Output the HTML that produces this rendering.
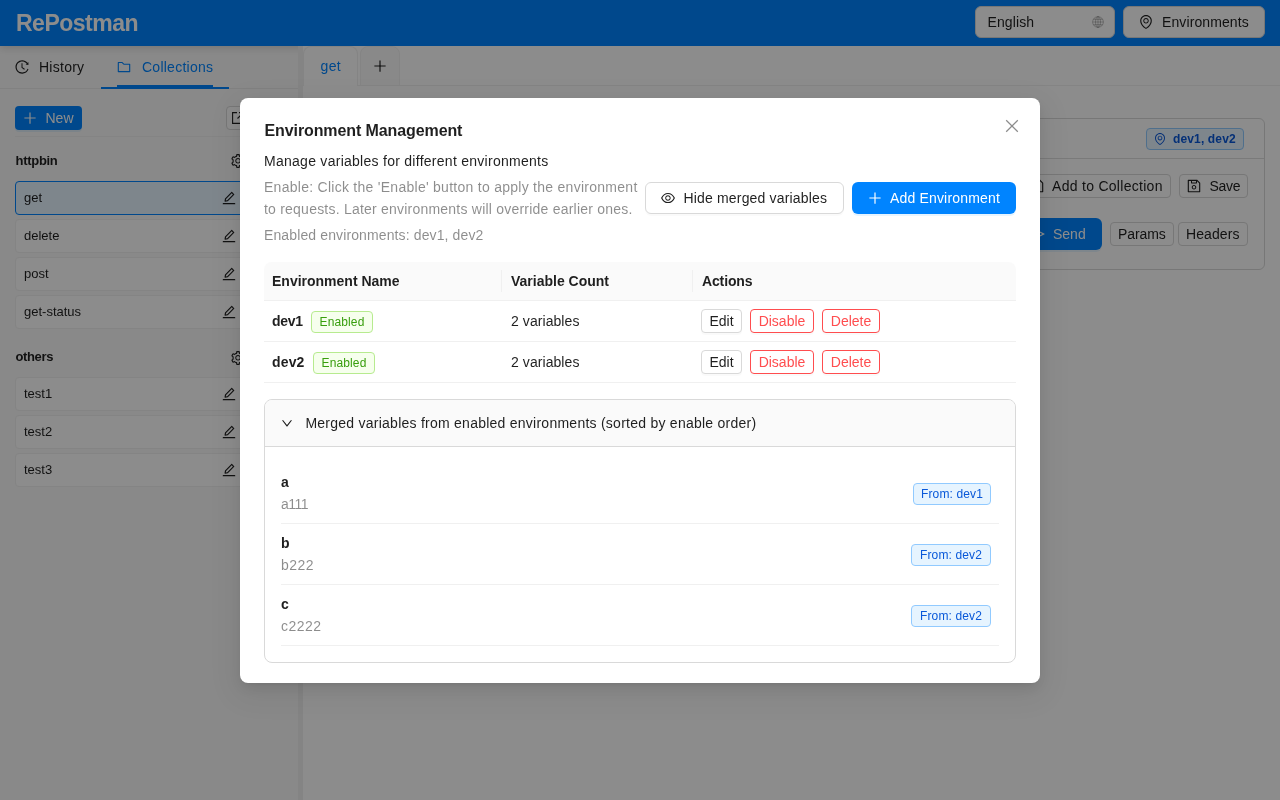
<!DOCTYPE html>
<html lang="en">
<head>
<meta charset="utf-8">
<title>RePostman</title>
<style>
*{box-sizing:border-box}
html,body{margin:0;padding:0}
body{width:1280px;height:800px;overflow:hidden;position:relative;background:#fff;
  font-family:"Liberation Sans",sans-serif;font-size:14px;line-height:22px;color:rgba(0,0,0,.88)}
.abs{position:absolute}
#hdr,#side,#main,#modal{will-change:transform}
svg{display:block}
b{font-weight:700}
/* header */
#hdr{position:absolute;left:0;top:0;width:1280px;height:46px;background:#0084ff;box-shadow:0 2px 8px rgba(0,0,0,.15);z-index:2}
#logo{position:absolute;left:16px;top:0;height:46px;line-height:46px;font-size:23px;font-weight:700;color:#fff;letter-spacing:-.5px;white-space:nowrap}
.hbtn{position:absolute;top:6px;height:32px;border-radius:6px;background:#fff;border:1px solid #d9d9d9;white-space:nowrap}
/* sidebar */
#side{position:absolute;left:0;top:46px;width:298px;height:754px;background:#fafafa}
#handle{position:absolute;left:298px;top:46px;width:5px;height:754px;background:#f0f0f0;z-index:3}
#main{position:absolute;left:303px;top:46px;width:977px;height:754px;background:#fff;z-index:3}
.t{position:absolute;white-space:nowrap}
.item{position:absolute;left:15px;width:240px;height:34px;border:1px solid #f0f0f0;border-radius:4px;background:#fff}
.item span{position:absolute;left:8px;top:5px;font-size:13px;line-height:22px}
.item.sel{border-color:#0084ff;background:#e6f4ff}
.btn{position:absolute;border:1px solid #d9d9d9;border-radius:4px;background:#fff;white-space:nowrap}
/* mask + modal */
#mask{position:absolute;left:0;top:0;width:1280px;height:800px;background:rgba(0,0,0,.45);z-index:5}
#modal{position:absolute;left:240px;top:98px;width:800px;height:585px;background:#fff;border-radius:8px;z-index:6;
  box-shadow:0 6px 16px 0 rgba(0,0,0,.08),0 3px 6px -4px rgba(0,0,0,.12),0 9px 28px 8px rgba(0,0,0,.05)}
.g{color:rgba(0,0,0,.45)}
.mb{position:absolute;border-radius:6px;height:32px;white-space:nowrap;font-size:14px;line-height:30px}
.sb{position:absolute;height:24px;border:1px solid #d9d9d9;border-radius:4px;background:#fff;font-size:14px;line-height:22px;text-align:center;white-space:nowrap;box-shadow:0 2px 0 rgba(0,0,0,.02)}
.sb.d{border-color:#ff4d4f;color:#ff4d4f}
.tag{letter-spacing:.12px;position:absolute;height:22px;border-radius:4px;font-size:12px;line-height:20px;text-align:center;white-space:nowrap}
.tag.gr{background:#f6ffed;border:1px solid #b7eb8f;color:#389e0d}
.tag.bl{background:#e6f4ff;border:1px solid #91caff;color:#0958d9}
.hl{position:absolute;height:1px;background:#f0f0f0}
</style>
</head>
<body>

<!-- ================= APP BEHIND ================= -->
<div id="hdr">
  <div id="logo">RePostman</div>
  <div class="hbtn" style="left:975px;width:140px">
    <span class="t" style="left:11.500px;top:4px;letter-spacing:.12px">English</span>
    <svg width="12" height="12" viewBox="0 0 12 12" fill="none" stroke="rgba(0,0,0,.25)" stroke-width="0.9" style="position:absolute;left:116px;top:9px"><circle cx="6" cy="6" r="5.4"/><ellipse cx="6" cy="6" rx="2.5" ry="5.4"/><path d="M.6 6h10.800M1.400 3.300h9.200M1.400 8.700h9.200M6 .6v10.800"/></svg>
  </div>
  <div class="hbtn" style="left:1123px;width:142px">
    <svg width="14" height="14" viewBox="64 64 896 896" fill="currentColor" style="position:absolute;left:15px;top:8px;"><path d="M854.600 289.100a362.490 362.490 0 00-79.900-115.700 370.830 370.830 0 00-118.200-77.800C610.700 76.600 562.100 67 512 67c-50.100 0-98.700 9.600-144.500 28.500-44.300 18.300-84 44.500-118.200 77.800A363.600 363.600 0 00169.400 289c-19.500 45-29.400 92.800-29.400 142 0 70.600 16.900 140.900 50.100 208.700 26.700 54.500 64 107.600 111 158.100 80.300 86.200 164.500 138.900 188.400 153a43.900 43.900 0 0022.400 6.100c7.800 0 15.500-2 22.400-6.100 23.900-14.100 108.100-66.800 188.400-153 47-50.400 84.300-103.600 111-158.100C867.100 572 884 501.800 884 431.100c0-49.200-9.900-97-29.400-142zM512 880.200c-65.900-41.900-300-207.800-300-449.100 0-77.900 31.100-151.100 87.600-206.300C356.300 169.500 431.700 139 512 139s155.700 30.500 212.400 85.900C780.900 280 812 353.200 812 431.100c0 241.300-234.100 407.200-300 449.100zm0-617.200c-97.200 0-176 78.800-176 176s78.800 176 176 176 176-78.800 176-176-78.800-176-176-176zm79.200 255.200A111.600 111.600 0 01512 551c-29.900 0-58-11.700-79.200-32.800A111.600 111.600 0 01400 439c0-29.900 11.700-58 32.800-79.200C454 338.600 482.100 327 512 327c29.900 0 58 11.600 79.200 32.800C612.400 381 624 409.100 624 439c0 29.900-11.600 58-32.800 79.200z"/></svg>
    <span class="t" style="left:38px;top:4px;letter-spacing:.1px">Environments</span>
  </div>
</div>

<div id="side">
  <svg width="14" height="14" viewBox="64 64 896 896" fill="currentColor" style="position:absolute;left:15px;top:14px;"><path d="M536.100 273H488c-4.400 0-8 3.600-8 8v275.300c0 2.600 1.200 5 3.300 6.500l165.300 120.700c3.600 2.600 8.600 1.900 11.200-1.700l28.600-39c2.700-3.700 1.900-8.700-1.700-11.200L544.100 528.500V281c0-4.400-3.600-8-8-8zm219.800 75.200l156.800 38.300c5 1.200 9.900-2.600 9.900-7.700l.8-161.500c0-6.700-7.700-10.500-12.900-6.300L752.900 334.100a8 8 0 003 14.100zm167.700 301.100l-56.700-19.500a8 8 0 00-10.100 4.800c-1.900 5.100-3.900 10.100-6 15.100-17.800 42.100-43.300 80-75.900 112.500a353 353 0 01-112.500 75.900 352.180 352.180 0 01-137.700 27.800c-47.800 0-94.100-9.300-137.700-27.800a353 353 0 01-112.500-75.900c-32.500-32.500-58-70.400-75.900-112.500A353.440 353.440 0 01171 512c0-47.800 9.300-94.200 27.800-137.800 17.800-42.100 43.300-80 75.900-112.500a353 353 0 01112.500-75.900C430.600 167.300 477 158 524.800 158s94.100 9.300 137.700 27.800A353 353 0 01775 261.700c10.200 10.300 19.800 21 28.600 32.300l59.800-46.800C784.700 146.600 662.200 81.900 524.600 82 285 82.100 92.600 276.700 95 516.400 97.400 751.900 288.900 942 524.800 942c185.500 0 343.500-117.600 403.700-282.300 1.500-4.200-.7-8.900-4.900-10.400z"/></svg>
  <span class="t" style="left:39px;top:10px;letter-spacing:.26px">History</span>
  <svg width="14" height="14" viewBox="64 64 896 896" fill="currentColor" style="position:absolute;left:117px;top:14px;color:#0084ff;"><path d="M880 298.400H521L403.700 186.200a8.150 8.150 0 00-5.500-2.200H144c-17.700 0-32 14.300-32 32v592c0 17.700 14.300 32 32 32h736c17.700 0 32-14.300 32-32V330.400c0-17.700-14.300-32-32-32zM840 768H184V256h188.500l119.600 114.400H840V768z"/></svg>
  <span class="t" style="left:142px;top:10px;color:#0084ff;letter-spacing:.25px">Collections</span>
  <div class="abs" style="left:0;top:42px;width:298px;height:1px;background:#ececec"></div>
  <div class="abs" style="left:101px;top:41px;width:128px;height:2px;background:#0084ff"></div>
  <div class="abs" style="left:117px;top:39px;width:96px;height:2px;background:#0084ff"></div>

  <div class="abs" style="left:15px;top:60px;width:67px;height:24px;border-radius:4px;background:#0084ff;color:#fff;box-shadow:0 2px 0 rgba(5,145,255,.1)">
    <svg width="14" height="14" viewBox="64 64 896 896" fill="currentColor" style="position:absolute;left:8px;top:5px;"><path d="M482 152h60q8 0 8 8v704q0 8-8 8h-60q-8 0-8-8V160q0-8 8-8z"/><path d="M192 474h672q8 0 8 8v60q0 8-8 8H160q-8 0-8-8v-60q0-8 8-8z"/></svg>
    <span class="t" style="left:30.500px;top:1px">New</span>
  </div>
  <div class="btn" style="left:226px;top:60px;width:24px;height:24px">
    <svg width="14" height="14" viewBox="0 0 14 14" fill="none" stroke="currentColor" stroke-width="1.1" style="position:absolute;left:4px;top:4px"><path d="M12.400 8v4.400H1.600V1.600H6"/><path d="M8 1.600h4.400V6M12.400 1.600L6.500 7.500"/></svg>
  </div>
  <div class="abs" style="left:15px;top:90px;width:240px;height:1px;background:#f0f0f0"></div>

  <span class="t" style="left:15.500px;top:104px;font-size:13px;font-weight:700;letter-spacing:-.29px">httpbin</span>
  <svg width="14" height="14" viewBox="64 64 896 896" fill="currentColor" style="position:absolute;left:230.800px;top:108px;"><path d="M924.800 625.700l-65.500-56c3.100-19 4.700-38.400 4.700-57.800s-1.600-38.800-4.700-57.800l65.500-56a32.030 32.030 0 009.300-35.200l-.9-2.600a442.090 442.090 0 00-79.700-137.900l-1.800-2.100a32.120 32.120 0 00-35.100-9.500l-81.300 28.900c-30-24.600-63.500-44-99.700-57.600l-15.700-85a32.050 32.050 0 00-25.800-25.700l-2.700-.5c-52.100-9.400-106.900-9.400-159 0l-2.700.5a32.050 32.050 0 00-25.800 25.700l-15.800 85.400a351.860 351.860 0 00-99 57.400l-81.900-29.100a32 32 0 00-35.100 9.500l-1.800 2.100a446.020 446.020 0 00-79.700 137.900l-.9 2.600c-4.500 12.500-.8 26.500 9.300 35.200l66.300 56.600c-3.100 18.800-4.600 38-4.600 57.100 0 19.200 1.500 38.400 4.600 57.100L99 625.500a32.030 32.030 0 00-9.300 35.200l.9 2.600c18.100 50.400 44.900 96.900 79.700 137.900l1.800 2.100a32.120 32.120 0 0035.100 9.500l81.900-29.100c29.800 24.500 63.100 43.900 99 57.400l15.800 85.400a32.050 32.050 0 0025.800 25.700l2.700.5a449.400 449.400 0 00159 0l2.700-.5a32.050 32.050 0 0025.800-25.700l15.700-85a350 350 0 0099.700-57.600l81.300 28.900a32 32 0 0035.100-9.500l1.800-2.100c34.800-41.100 61.600-87.500 79.700-137.900l.9-2.600c4.500-12.300.8-26.300-9.300-35zM788.300 465.900c2.500 15.100 3.800 30.600 3.800 46.100s-1.300 31-3.800 46.100l-6.600 40.100 74.700 63.900a370.030 370.030 0 01-42.600 73.600L721 702.800l-31.400 25.800c-23.900 19.600-50.500 35-79.300 45.800l-38.100 14.300-17.900 97a377.500 377.500 0 01-85 0l-17.900-97.200-37.800-14.500c-28.500-10.800-55-26.200-78.700-45.700l-31.400-25.900-93.400 33.200c-17-22.900-31.200-47.600-42.600-73.600l75.500-64.500-6.500-40c-2.400-14.900-3.700-30.300-3.700-45.500 0-15.300 1.200-30.600 3.700-45.500l6.500-40-75.500-64.500c11.300-26.100 25.600-50.700 42.600-73.600l93.400 33.200 31.400-25.900c23.700-19.500 50.200-34.900 78.700-45.700l37.900-14.300 17.900-97.200c28.100-3.200 56.800-3.200 85 0l17.900 97 38.100 14.300c28.700 10.800 55.400 26.200 79.300 45.800l31.400 25.800 92.800-32.900c17 22.900 31.200 47.600 42.600 73.600L781.800 426l6.500 39.900zM512 326c-97.200 0-176 78.800-176 176s78.800 176 176 176 176-78.800 176-176-78.800-176-176-176zm79.200 255.200A111.600 111.600 0 01512 614c-29.900 0-58-11.700-79.200-32.800A111.600 111.600 0 01400 502c0-29.900 11.700-58 32.800-79.200C454 401.600 482.100 390 512 390c29.900 0 58 11.600 79.200 32.800A111.600 111.600 0 01624 502c0 29.900-11.700 58-32.800 79.200z"/></svg>
  <div class="item sel" style="top:135px"><span>get</span><svg width="14" height="14" viewBox="64 64 896 896" fill="currentColor" style="position:absolute;left:206.200px;top:9px;"><path d="M257.700 752c2 0 4-.2 6-.5L431.900 722c2-.4 3.900-1.300 5.300-2.800l423.900-423.900a9.960 9.960 0 000-14.100L694.900 114.900c-1.900-1.900-4.400-2.900-7.100-2.900s-5.200 1-7.100 2.900L256.800 538.800c-1.500 1.500-2.400 3.300-2.800 5.300l-29.500 168.200a33.500 33.500 0 009.400 29.800c6.600 6.400 14.900 9.900 23.800 9.900zm67.400-174.400L687.800 215l73.300 73.300-362.700 362.600-88.900 15.700 15.600-89zM880 836H144c-17.700 0-32 14.300-32 32v36c0 4.400 3.600 8 8 8h784c4.400 0 8-3.600 8-8v-36c0-17.700-14.300-32-32-32z"/></svg></div>
  <div class="item" style="top:173px"><span>delete</span><svg width="14" height="14" viewBox="64 64 896 896" fill="currentColor" style="position:absolute;left:206.200px;top:9px;"><path d="M257.700 752c2 0 4-.2 6-.5L431.900 722c2-.4 3.900-1.300 5.300-2.800l423.900-423.900a9.960 9.960 0 000-14.100L694.900 114.900c-1.900-1.900-4.400-2.900-7.100-2.900s-5.200 1-7.100 2.900L256.800 538.800c-1.500 1.500-2.400 3.300-2.800 5.300l-29.500 168.200a33.500 33.500 0 009.400 29.800c6.600 6.400 14.900 9.900 23.800 9.900zm67.400-174.400L687.800 215l73.300 73.300-362.700 362.600-88.900 15.700 15.600-89zM880 836H144c-17.700 0-32 14.300-32 32v36c0 4.400 3.600 8 8 8h784c4.400 0 8-3.600 8-8v-36c0-17.700-14.300-32-32-32z"/></svg></div>
  <div class="item" style="top:211px"><span>post</span><svg width="14" height="14" viewBox="64 64 896 896" fill="currentColor" style="position:absolute;left:206.200px;top:9px;"><path d="M257.700 752c2 0 4-.2 6-.5L431.900 722c2-.4 3.900-1.300 5.300-2.800l423.900-423.900a9.960 9.960 0 000-14.100L694.900 114.900c-1.900-1.900-4.400-2.900-7.100-2.900s-5.200 1-7.100 2.900L256.800 538.800c-1.500 1.500-2.400 3.300-2.800 5.300l-29.500 168.200a33.500 33.500 0 009.400 29.800c6.600 6.400 14.900 9.900 23.800 9.900zm67.400-174.400L687.800 215l73.300 73.300-362.700 362.600-88.900 15.700 15.600-89zM880 836H144c-17.700 0-32 14.300-32 32v36c0 4.400 3.600 8 8 8h784c4.400 0 8-3.600 8-8v-36c0-17.700-14.300-32-32-32z"/></svg></div>
  <div class="item" style="top:249px"><span>get-status</span><svg width="14" height="14" viewBox="64 64 896 896" fill="currentColor" style="position:absolute;left:206.200px;top:9px;"><path d="M257.700 752c2 0 4-.2 6-.5L431.900 722c2-.4 3.900-1.300 5.300-2.800l423.900-423.900a9.960 9.960 0 000-14.100L694.900 114.900c-1.900-1.900-4.400-2.900-7.100-2.900s-5.200 1-7.100 2.900L256.800 538.800c-1.500 1.500-2.400 3.300-2.800 5.300l-29.500 168.200a33.500 33.500 0 009.400 29.800c6.600 6.400 14.900 9.900 23.800 9.900zm67.400-174.400L687.800 215l73.300 73.300-362.700 362.600-88.900 15.700 15.600-89zM880 836H144c-17.700 0-32 14.300-32 32v36c0 4.400 3.600 8 8 8h784c4.400 0 8-3.600 8-8v-36c0-17.700-14.300-32-32-32z"/></svg></div>

  <span class="t" style="left:15.500px;top:300px;font-size:13px;font-weight:700;letter-spacing:-.37px">others</span>
  <svg width="14" height="14" viewBox="64 64 896 896" fill="currentColor" style="position:absolute;left:230.800px;top:304.500px;"><path d="M924.800 625.700l-65.500-56c3.100-19 4.700-38.400 4.700-57.800s-1.600-38.800-4.700-57.800l65.500-56a32.030 32.030 0 009.300-35.200l-.9-2.600a442.090 442.090 0 00-79.700-137.900l-1.800-2.100a32.120 32.120 0 00-35.100-9.500l-81.300 28.900c-30-24.600-63.500-44-99.700-57.600l-15.700-85a32.050 32.050 0 00-25.800-25.700l-2.700-.5c-52.100-9.400-106.900-9.400-159 0l-2.700.5a32.050 32.050 0 00-25.800 25.700l-15.800 85.400a351.860 351.860 0 00-99 57.400l-81.900-29.100a32 32 0 00-35.100 9.500l-1.800 2.100a446.020 446.020 0 00-79.700 137.900l-.9 2.600c-4.500 12.500-.8 26.500 9.300 35.200l66.300 56.600c-3.100 18.800-4.600 38-4.600 57.100 0 19.200 1.500 38.400 4.600 57.100L99 625.500a32.030 32.030 0 00-9.300 35.200l.9 2.600c18.100 50.400 44.900 96.900 79.700 137.900l1.800 2.100a32.120 32.120 0 0035.100 9.500l81.900-29.100c29.800 24.500 63.100 43.900 99 57.400l15.800 85.400a32.050 32.050 0 0025.800 25.700l2.700.5a449.400 449.400 0 00159 0l2.700-.5a32.050 32.050 0 0025.800-25.700l15.700-85a350 350 0 0099.700-57.600l81.300 28.900a32 32 0 0035.100-9.500l1.800-2.100c34.800-41.100 61.600-87.500 79.700-137.900l.9-2.600c4.500-12.300.8-26.300-9.300-35zM788.300 465.900c2.500 15.100 3.800 30.600 3.800 46.100s-1.300 31-3.800 46.100l-6.600 40.100 74.700 63.900a370.030 370.030 0 01-42.600 73.600L721 702.800l-31.400 25.800c-23.900 19.600-50.500 35-79.300 45.800l-38.100 14.300-17.900 97a377.500 377.500 0 01-85 0l-17.900-97.200-37.800-14.500c-28.500-10.800-55-26.200-78.700-45.700l-31.400-25.900-93.400 33.200c-17-22.900-31.200-47.600-42.600-73.600l75.500-64.500-6.500-40c-2.400-14.900-3.700-30.300-3.700-45.500 0-15.300 1.200-30.600 3.700-45.500l6.500-40-75.500-64.500c11.300-26.100 25.600-50.700 42.600-73.600l93.400 33.200 31.400-25.900c23.700-19.500 50.200-34.900 78.700-45.700l37.900-14.300 17.900-97.200c28.100-3.200 56.800-3.200 85 0l17.900 97 38.100 14.300c28.700 10.800 55.400 26.200 79.300 45.800l31.400 25.800 92.800-32.900c17 22.900 31.200 47.600 42.600 73.600L781.800 426l6.500 39.900zM512 326c-97.200 0-176 78.800-176 176s78.800 176 176 176 176-78.800 176-176-78.800-176-176-176zm79.200 255.200A111.600 111.600 0 01512 614c-29.900 0-58-11.700-79.200-32.800A111.600 111.600 0 01400 502c0-29.900 11.700-58 32.800-79.200C454 401.600 482.100 390 512 390c29.900 0 58 11.600 79.200 32.800A111.600 111.600 0 01624 502c0 29.900-11.700 58-32.800 79.200z"/></svg>
  <div class="item" style="top:331px"><span>test1</span><svg width="14" height="14" viewBox="64 64 896 896" fill="currentColor" style="position:absolute;left:206.200px;top:9px;"><path d="M257.700 752c2 0 4-.2 6-.5L431.900 722c2-.4 3.900-1.300 5.300-2.800l423.900-423.900a9.960 9.960 0 000-14.100L694.900 114.900c-1.900-1.900-4.400-2.900-7.100-2.900s-5.200 1-7.100 2.900L256.800 538.800c-1.500 1.500-2.400 3.300-2.800 5.300l-29.500 168.200a33.500 33.500 0 009.400 29.800c6.600 6.400 14.900 9.900 23.800 9.900zm67.400-174.400L687.800 215l73.300 73.300-362.700 362.600-88.900 15.700 15.600-89zM880 836H144c-17.700 0-32 14.300-32 32v36c0 4.400 3.600 8 8 8h784c4.400 0 8-3.600 8-8v-36c0-17.700-14.300-32-32-32z"/></svg></div>
  <div class="item" style="top:369px"><span>test2</span><svg width="14" height="14" viewBox="64 64 896 896" fill="currentColor" style="position:absolute;left:206.200px;top:9px;"><path d="M257.700 752c2 0 4-.2 6-.5L431.900 722c2-.4 3.900-1.300 5.300-2.800l423.900-423.900a9.960 9.960 0 000-14.100L694.900 114.900c-1.900-1.900-4.400-2.900-7.100-2.900s-5.200 1-7.100 2.900L256.800 538.800c-1.500 1.500-2.400 3.300-2.800 5.300l-29.500 168.200a33.500 33.500 0 009.400 29.800c6.600 6.400 14.900 9.900 23.800 9.900zm67.400-174.400L687.800 215l73.300 73.300-362.700 362.600-88.900 15.700 15.600-89zM880 836H144c-17.700 0-32 14.300-32 32v36c0 4.400 3.600 8 8 8h784c4.400 0 8-3.600 8-8v-36c0-17.700-14.300-32-32-32z"/></svg></div>
  <div class="item" style="top:407px"><span>test3</span><svg width="14" height="14" viewBox="64 64 896 896" fill="currentColor" style="position:absolute;left:206.200px;top:9px;"><path d="M257.700 752c2 0 4-.2 6-.5L431.900 722c2-.4 3.900-1.300 5.300-2.800l423.900-423.900a9.960 9.960 0 000-14.100L694.900 114.900c-1.900-1.900-4.400-2.900-7.100-2.900s-5.200 1-7.100 2.900L256.800 538.800c-1.500 1.500-2.400 3.300-2.800 5.300l-29.500 168.200a33.500 33.500 0 009.400 29.800c6.600 6.400 14.900 9.900 23.800 9.900zm67.400-174.400L687.800 215l73.300 73.300-362.700 362.600-88.900 15.700 15.600-89zM880 836H144c-17.700 0-32 14.300-32 32v36c0 4.400 3.600 8 8 8h784c4.400 0 8-3.600 8-8v-36c0-17.700-14.300-32-32-32z"/></svg></div>
</div>
<div id="handle"></div>

<div id="main">
  <!-- tab bar -->
  <div class="abs" style="left:0;top:0;width:977px;height:40px;background:#fff;border-bottom:1px solid #f0f0f0"></div>
  <div class="abs" style="left:0;top:0;width:55px;height:40px;background:#fff;border:1px solid #f0f0f0;border-bottom:none;border-radius:8px 8px 0 0"></div>
  <span class="t" style="left:17.400px;top:9px;color:#0084ff;letter-spacing:.45px">get</span>
  <div class="abs" style="left:57px;top:0;width:40px;height:40px;background:#fafafa;border:1px solid #f0f0f0;border-radius:8px 8px 0 0"></div>
  <svg width="14" height="14" viewBox="64 64 896 896" fill="currentColor" style="position:absolute;left:70px;top:13px;"><path d="M482 152h60q8 0 8 8v704q0 8-8 8h-60q-8 0-8-8V160q0-8 8-8z"/><path d="M192 474h672q8 0 8 8v60q0 8-8 8H160q-8 0-8-8v-60q0-8 8-8z"/></svg>

  <!-- card -->
  <div class="abs" style="left:16px;top:72px;width:946px;height:152px;border:1px solid #d9d9d9;border-radius:6px"></div>
  <div class="abs" style="left:17px;top:112px;width:944px;height:1px;background:#dfdfdf"></div>
  <div class="tag bl" style="left:843px;top:82px;width:98px;font-weight:700;font-size:12px"><svg width="12" height="12" viewBox="64 64 896 896" fill="currentColor" style="position:absolute;left:7px;top:4px;"><path d="M854.600 289.100a362.490 362.490 0 00-79.900-115.700 370.830 370.830 0 00-118.200-77.800C610.700 76.600 562.100 67 512 67c-50.100 0-98.700 9.600-144.500 28.500-44.300 18.300-84 44.500-118.200 77.800A363.600 363.600 0 00169.400 289c-19.500 45-29.400 92.800-29.400 142 0 70.600 16.900 140.900 50.100 208.700 26.700 54.500 64 107.600 111 158.100 80.300 86.200 164.500 138.900 188.400 153a43.900 43.900 0 0022.400 6.100c7.800 0 15.500-2 22.400-6.100 23.900-14.100 108.100-66.800 188.400-153 47-50.400 84.300-103.600 111-158.100C867.100 572 884 501.800 884 431.100c0-49.200-9.900-97-29.400-142zM512 880.200c-65.900-41.900-300-207.800-300-449.100 0-77.900 31.100-151.100 87.600-206.300C356.300 169.500 431.700 139 512 139s155.700 30.500 212.400 85.900C780.900 280 812 353.200 812 431.100c0 241.300-234.100 407.200-300 449.100zm0-617.200c-97.200 0-176 78.800-176 176s78.800 176 176 176 176-78.800 176-176-78.800-176-176-176zm79.200 255.200A111.600 111.600 0 01512 551c-29.900 0-58-11.700-79.200-32.800A111.600 111.600 0 01400 439c0-29.900 11.700-58 32.800-79.200C454 338.600 482.100 327 512 327c29.900 0 58 11.600 79.200 32.800C612.400 381 624 409.100 624 439c0 29.900-11.600 58-32.800 79.200z"/></svg><span class="t" style="left:26px;top:0;letter-spacing:.14px">dev1, dev2</span></div>
  <div class="btn" style="left:700px;top:128px;width:168px;height:24px"><svg width="14" height="14" viewBox="64 64 896 896" fill="currentColor" style="position:absolute;left:26px;top:4px;"><path d="M893.300 293.300L730.700 130.700c-7.500-7.500-16.700-13-26.700-16V112H144c-17.700 0-32 14.300-32 32v736c0 17.700 14.300 32 32 32h736c17.700 0 32-14.300 32-32V338.500c0-17-6.700-33.200-18.700-45.200zM384 184h256v104H384V184zm456 656H184V184h136v136c0 17.700 14.300 32 32 32h320c17.700 0 32-14.300 32-32V205.800l136 136V840zM512 442c-79.500 0-144 64.500-144 144s64.500 144 144 144 144-64.500 144-144-64.500-144-144-144zm0 224c-44.200 0-80-35.800-80-80s35.800-80 80-80 80 35.800 80 80-35.800 80-80 80z"/></svg><span class="t" style="left:48px;top:0;letter-spacing:.29px">Add to Collection</span></div>
  <div class="btn" style="left:876px;top:128px;width:69px;height:24px"><svg width="14" height="14" viewBox="64 64 896 896" fill="currentColor" style="position:absolute;left:7px;top:4px;"><path d="M893.300 293.300L730.700 130.700c-7.500-7.500-16.700-13-26.700-16V112H144c-17.700 0-32 14.300-32 32v736c0 17.700 14.300 32 32 32h736c17.700 0 32-14.300 32-32V338.500c0-17-6.700-33.200-18.700-45.200zM384 184h256v104H384V184zm456 656H184V184h136v136c0 17.700 14.300 32 32 32h320c17.700 0 32-14.300 32-32V205.800l136 136V840zM512 442c-79.500 0-144 64.500-144 144s64.500 144 144 144 144-64.500 144-144-64.500-144-144-144zm0 224c-44.200 0-80-35.800-80-80s35.800-80 80-80 80 35.800 80 80-35.800 80-80 80z"/></svg><span class="t" style="left:29.500px;top:0;letter-spacing:-.3px">Save</span></div>
  <div class="abs" style="left:700px;top:172px;width:99px;height:32px;border-radius:6px;background:#0084ff;color:#fff;box-shadow:0 2px 0 rgba(5,145,255,.1)"><svg width="14" height="14" viewBox="64 64 896 896" fill="currentColor" style="position:absolute;left:28px;top:9px;"><path d="M931.400 498.900L94.900 79.500c-3.400-1.700-7.300-2.100-11-1.200a15.990 15.990 0 00-11.700 19.300l86.200 352.200c1.300 5.300 5.200 9.600 10.400 11.300l147.700 50.700-147.600 50.700c-5.200 1.800-9.100 6-10.300 11.300L72.200 926.500c-.9 3.700-.5 7.600 1.200 10.900 3.900 7.900 13.500 11.100 21.500 7.200l836.500-417c3.100-1.500 5.600-4.100 7.200-7.100 3.900-8 .7-17.600-7.200-21.600zM170.800 826.300l50.300-205.600 295.200-101.300c2.300-.8 4.200-2.600 5-5 1.400-4.200-.8-8.700-5-10.200L221.100 403 171 198.200l628 314.900-628.200 313.200z"/></svg><span class="t" style="left:50px;top:5px">Send</span></div>
  <div class="btn" style="left:807px;top:176px;width:64px;height:24px"><span class="t" style="left:7px;top:0;letter-spacing:-.1px">Params</span></div>
  <div class="btn" style="left:875px;top:176px;width:70px;height:24px"><span class="t" style="left:7px;top:0;letter-spacing:.1px">Headers</span></div>
</div>

<div id="mask"></div>

<!-- ================= MODAL ================= -->
<div id="modal">
  <span class="t" style="left:24.500px;top:21px;font-size:16px;font-weight:700;line-height:24px;letter-spacing:-.1px">Environment Management</span>
  <svg width="16" height="16" viewBox="0 0 16 16" fill="none" stroke="rgba(0,0,0,.45)" stroke-width="1.25" style="position:absolute;left:764px;top:20px"><path d="M2.200 2.200l11.600 11.600M13.800 2.200L2.200 13.800"/></svg>
  <span class="t" style="left:24px;top:52px;letter-spacing:.27px">Manage variables for different environments</span>
  <span class="t g" style="left:24px;top:78px;letter-spacing:.27px">Enable: Click the 'Enable' button to apply the environment</span>
  <span class="t g" style="left:24px;top:100px;letter-spacing:.22px">to requests. Later environments will override earlier ones.</span>
  <span class="t g" style="left:24px;top:126px;letter-spacing:.12px">Enabled environments: dev1, dev2</span>

  <div class="mb" style="left:405px;top:84px;width:199px;border:1px solid #d9d9d9;background:#fff;box-shadow:0 2px 0 rgba(0,0,0,.02)"><svg width="14" height="14" viewBox="64 64 896 896" fill="currentColor" style="position:absolute;left:15px;top:8px;"><path d="M942.200 486.200C847.400 286.500 704.100 186 512 186c-192.200 0-335.400 100.500-430.200 300.300a60.300 60.300 0 000 51.500C176.600 737.500 319.900 838 512 838c192.200 0 335.400-100.500 430.200-300.300 7.700-16.200 7.700-35 0-51.500zM512 766c-161.300 0-279.400-81.800-362.700-254C232.600 339.800 350.700 258 512 258c161.300 0 279.400 81.800 362.700 254C791.500 684.200 673.400 766 512 766zm-4-430c-97.200 0-176 78.800-176 176s78.800 176 176 176 176-78.800 176-176-78.800-176-176-176zm0 288c-61.900 0-112-50.100-112-112s50.100-112 112-112 112 50.100 112 112-50.100 112-112 112z"/></svg><span class="t" style="left:37.500px;top:0;letter-spacing:.17px">Hide merged variables</span></div>
  <div class="mb" style="left:612px;top:84px;width:164px;background:#0084ff;color:#fff;line-height:32px;box-shadow:0 2px 0 rgba(5,145,255,.1)"><svg width="14" height="14" viewBox="64 64 896 896" fill="currentColor" style="position:absolute;left:16px;top:9px;"><path d="M482 152h60q8 0 8 8v704q0 8-8 8h-60q-8 0-8-8V160q0-8 8-8z"/><path d="M192 474h672q8 0 8 8v60q0 8-8 8H160q-8 0-8-8v-60q0-8 8-8z"/></svg><span class="t" style="left:38px;top:0;letter-spacing:.17px">Add Environment</span></div>

  <!-- table -->
  <div class="abs" style="left:24px;top:164px;width:752px;height:39px;background:#fafafa;border-radius:8px 8px 0 0;border-bottom:1px solid #f0f0f0"></div>
  <span class="t" style="left:32px;top:172px;font-weight:700">Environment Name</span>
  <span class="t" style="left:271px;top:172px;font-weight:700">Variable Count</span>
  <span class="t" style="left:462px;top:172px;font-weight:700;letter-spacing:-.14px">Actions</span>
  <div class="abs" style="left:261px;top:172px;width:1px;height:22px;background:#f0f0f0"></div>
  <div class="abs" style="left:452px;top:172px;width:1px;height:22px;background:#f0f0f0"></div>

  <span class="t" style="left:32px;top:212px;font-weight:700;letter-spacing:-.3px">dev1</span>
  <div class="tag gr" style="left:71px;top:213px;width:62px">Enabled</div>
  <span class="t" style="left:271px;top:212px;letter-spacing:.07px">2 variables</span>
  <div class="sb" style="left:461px;top:211px;width:41px">Edit</div>
  <div class="sb d" style="left:510px;top:211px;width:64px">Disable</div>
  <div class="sb d" style="left:582px;top:211px;width:58px">Delete</div>
  <div class="hl" style="left:24px;top:243px;width:752px"></div>

  <span class="t" style="left:32px;top:253px;font-weight:700;letter-spacing:.15px">dev2</span>
  <div class="tag gr" style="left:73px;top:254px;width:62px">Enabled</div>
  <span class="t" style="left:271px;top:253px;letter-spacing:.07px">2 variables</span>
  <div class="sb" style="left:461px;top:252px;width:41px">Edit</div>
  <div class="sb d" style="left:510px;top:252px;width:64px">Disable</div>
  <div class="sb d" style="left:582px;top:252px;width:58px">Delete</div>
  <div class="hl" style="left:24px;top:284px;width:752px"></div>

  <!-- collapse -->
  <div class="abs" style="left:24px;top:301px;width:752px;height:264px;border:1px solid #d9d9d9;border-radius:8px;overflow:hidden">
    <div class="abs" style="left:0;top:0;width:750px;height:47px;background:#fafafa;border-bottom:1px solid #d9d9d9"></div>
  </div>
  <svg width="12" height="12" viewBox="64 64 896 896" fill="currentColor" style="position:absolute;left:41.200px;top:319px;transform:rotate(90deg);"><path d="M765.700 486.800L314.900 134.700A7.970 7.970 0 00302 141v77.300c0 4.900 2.300 9.600 6.100 12.600l360 281.100-360 281.100c-3.900 3-6.100 7.700-6.100 12.600V883c0 6.700 7.700 10.400 12.900 6.300l450.800-352.100a31.960 31.960 0 000-50.400z"/></svg>
  <span class="t" style="left:65.400px;top:314px;letter-spacing:.25px">Merged variables from enabled environments (sorted by enable order)</span>

  <span class="t" style="left:41px;top:373px;font-weight:700">a</span>
  <span class="t g" style="left:41px;top:395px;letter-spacing:-.5px">a111</span>
  <div class="tag bl" style="left:673px;top:385px;width:78px">From: dev1</div>
  <div class="hl" style="left:41px;top:425px;width:718px"></div>

  <span class="t" style="left:41px;top:434px;font-weight:700">b</span>
  <span class="t g" style="left:41px;top:456px;letter-spacing:.45px">b222</span>
  <div class="tag bl" style="left:671px;top:446px;width:80px">From: dev2</div>
  <div class="hl" style="left:41px;top:486px;width:718px"></div>

  <span class="t" style="left:41px;top:495px;font-weight:700">c</span>
  <span class="t g" style="left:41px;top:517px;letter-spacing:.48px">c2222</span>
  <div class="tag bl" style="left:671px;top:507px;width:80px">From: dev2</div>
  <div class="hl" style="left:41px;top:547px;width:718px"></div>
</div>

</body>
</html>
